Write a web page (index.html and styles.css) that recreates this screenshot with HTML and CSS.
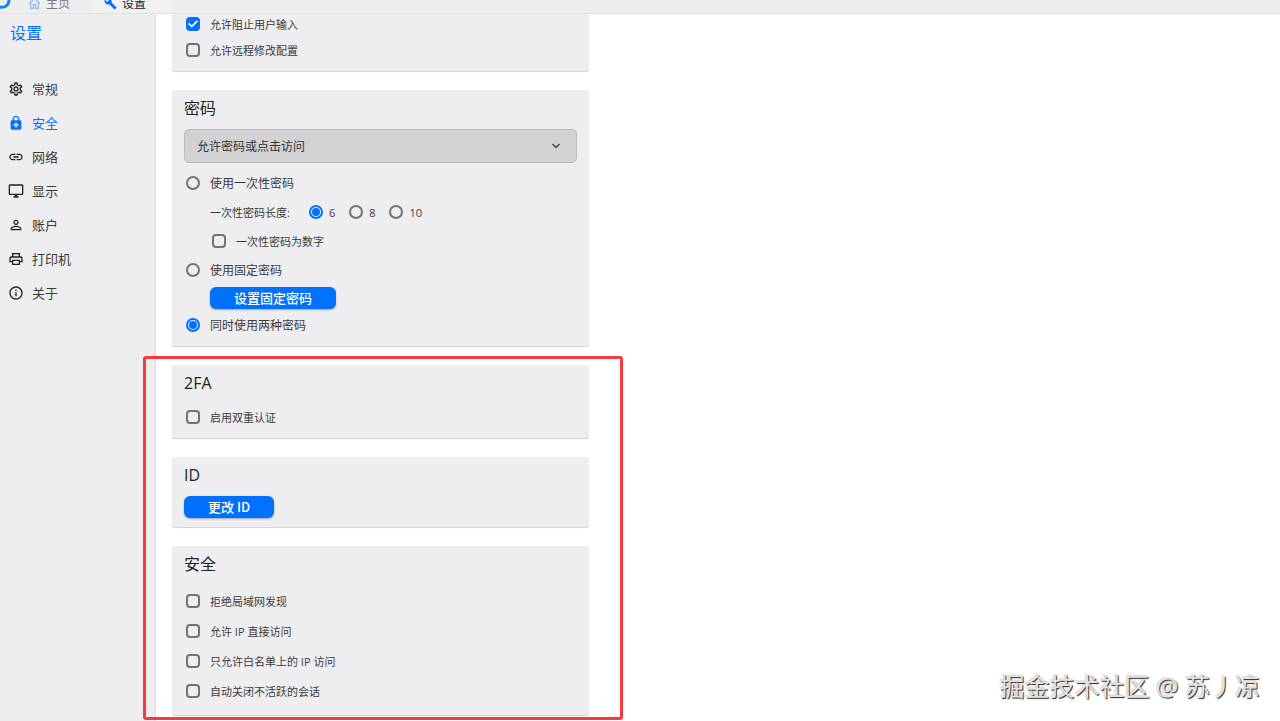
FILE: index.html
```html
<!DOCTYPE html>
<html lang="zh">
<head>
    <meta charset="UTF-8">
    <meta name="viewport" content="width=device-width, initial-scale=1.0">
    <title>设置</title>
    <link rel="stylesheet" href="styles.css">
</head>
<body>

<!-- 顶部标签栏 -->
<header class="tab-bar">
    <svg class="logo" viewBox="0 0 20 22"><path d="M14 3.500A7 7 0 1 1 6 3.500" fill="none" stroke="#0a84ff" stroke-width="3"/></svg>
    <a class="tab" href="#home">
        <svg class="tab-icon" viewBox="0 0 24 24"><path d="M2 12L12 3l10 9M5 10v11h5v-7h4v7h5V10" fill="none" stroke="#7db5ff" stroke-width="2"/></svg>
        主页
    </a>
    <a class="tab active" href="#settings">
        <svg class="tab-icon" viewBox="0 0 24 24"><path fill="#0071ff" d="M22.700 19l-9.100-9.100c.9-2.300.4-5-1.500-6.900-2-2-5-2.400-7.400-1.300L9 6 6 9 1.600 4.700C.4 7.100.9 10.100 2.900 12.100c1.900 1.900 4.600 2.400 6.900 1.500l9.100 9.100c.4.4 1 .4 1.400 0l2.300-2.300c.5-.4.5-1.100.1-1.400z"/></svg>
        设置
    </a>
</header>

<div class="layout">
    <!-- 左侧菜单 -->
    <aside class="sidebar">
        <h1>设置</h1>
        <nav>
            <a href="#general">
                <svg viewBox="0 0 24 24"><path d="M19.430 12.980c.04-.32.07-.64.07-.98 0-.34-.03-.66-.07-.98l2.110-1.650c.19-.15.24-.42.12-.64l-2-3.460c-.09-.16-.26-.25-.44-.25-.06 0-.12.01-.17.03l-2.490 1c-.52-.4-1.080-.73-1.690-.98l-.38-2.650C14.460 2.180 14.250 2 14 2h-4c-.25 0-.46.18-.49.42l-.38 2.650c-.61.25-1.170.59-1.690.98l-2.490-1c-.06-.02-.12-.03-.18-.03-.17 0-.34.09-.43.25l-2 3.460c-.13.22-.07.49.12.64l2.110 1.650c-.04.32-.07.65-.07.98 0 .33.03.66.07.98l-2.110 1.650c-.19.15-.24.42-.12.64l2 3.460c.09.16.26.25.44.25.06 0 .12-.01.17-.03l2.490-1c.52.4 1.080.73 1.690.98l.38 2.650c.03.24.24.42.49.42h4c.25 0 .46-.18.49-.42l.38-2.650c.61-.25 1.170-.59 1.690-.98l2.490 1c.06.02.12.03.18.03.17 0 .34-.09.43-.25l2-3.460c.12-.22.07-.49-.12-.64l-2.110-1.650zm-1.980-1.710c.04.31.05.52.05.73 0 .21-.02.43-.05.73l-.14 1.130.89.7 1.080.84-.7 1.210-1.270-.51-1.040-.42-.9.68c-.43.32-.84.56-1.250.73l-1.060.43-.16 1.130-.2 1.350h-1.400l-.19-1.350-.16-1.130-1.060-.43c-.43-.18-.83-.41-1.230-.71l-.91-.7-1.060.43-1.270.51-.7-1.210 1.080-.84.89-.7-.14-1.130c-.03-.31-.05-.54-.05-.74s.02-.43.05-.73l.14-1.130-.89-.7-1.080-.84.7-1.210 1.270.51 1.040.42.9-.68c.43-.32.84-.56 1.250-.73l1.060-.43.16-1.130.2-1.350h1.390l.19 1.350.16 1.130 1.060.43c.43.18.83.41 1.230.71l.91.7 1.060-.43 1.270-.51.7 1.210-1.070.85-.89.7.14 1.130zM12 8c-2.210 0-4 1.790-4 4s1.790 4 4 4 4-1.790 4-4-1.790-4-4-4zm0 6c-1.100 0-2-.9-2-2s.9-2 2-2 2 .9 2 2-.9 2-2 2z"/></svg>
                常规
            </a>
            <a href="#safety" class="active">
                <svg viewBox="0 0 24 24"><path fill-rule="evenodd" d="M18 8h-1V6c0-2.760-2.240-5-5-5S7 3.240 7 6v2H6c-1.100 0-2 .9-2 2v10c0 1.100.9 2 2 2h12c1.100 0 2-.9 2-2V10c0-1.100-.9-2-2-2zM8.900 6c0-1.710 1.390-3.100 3.100-3.100s3.100 1.390 3.100 3.100v2H8.900V6zM16 16h-3v3h-2v-3H8v-2h3v-3h2v3h3v2z"/></svg>
                安全
            </a>
            <a href="#network">
                <svg viewBox="0 0 24 24"><path d="M3.900 12c0-1.710 1.390-3.100 3.100-3.100h4V7H7c-2.760 0-5 2.240-5 5s2.240 5 5 5h4v-1.900H7c-1.710 0-3.100-1.390-3.100-3.100zM8 13h8v-2H8v2zm9-6h-4v1.900h4c1.710 0 3.100 1.390 3.100 3.100s-1.390 3.100-3.100 3.100h-4V17h4c2.760 0 5-2.240 5-5s-2.240-5-5-5z"/></svg>
                网络
            </a>
            <a href="#display">
                <svg viewBox="0 0 24 24"><path d="M21 2H3c-1.100 0-2 .9-2 2v12c0 1.100.9 2 2 2h7v2H8v2h8v-2h-2v-2h7c1.100 0 2-.9 2-2V4c0-1.100-.9-2-2-2zm0 14H3V4h18v12z"/></svg>
                显示
            </a>
            <a href="#account">
                <svg viewBox="0 0 24 24"><path d="M12 5.900c1.160 0 2.100.94 2.100 2.100s-.94 2.100-2.100 2.100S9.900 9.160 9.900 8s.94-2.100 2.100-2.100m0 9c2.970 0 6.100 1.460 6.100 2.100v1.100H5.900V17c0-.64 3.130-2.100 6.100-2.100M12 4C9.790 4 8 5.790 8 8s1.790 4 4 4 4-1.790 4-4-1.790-4-4-4zm0 9c-2.670 0-8 1.340-8 4v3h16v-3c0-2.660-5.330-4-8-4z"/></svg>
                账户
            </a>
            <a href="#printer">
                <svg viewBox="0 0 24 24"><path d="M19 8h-1V3H6v5H5c-1.660 0-3 1.340-3 3v6h4v4h12v-4h4v-6c0-1.660-1.340-3-3-3zM8 5h8v3H8V5zm8 14H8v-4h8v4zm2-4v-2H6v2H4v-4c0-.55.45-1 1-1h14c.55 0 1 .45 1 1v4h-2z"/></svg>
                打印机
            </a>
            <a href="#about">
                <svg viewBox="0 0 24 24"><path d="M11 7h2v2h-2zm0 4h2v6h-2zm1-9C6.480 2 2 6.480 2 12s4.480 10 10 10 10-4.480 10-10S17.520 2 12 2zm0 18c-4.410 0-8-3.590-8-8s3.590-8 8-8 8 3.590 8 8-3.590 8-8 8z"/></svg>
                关于
            </a>
        </nav>
    </aside>

    <main class="content">
        <!-- 权限 -->
        <section class="card card-scrolled">
            <div class="options options-tight">
                <label class="option"><input type="checkbox" checked>允许阻止用户输入</label>
                <label class="option"><input type="checkbox">允许远程修改配置</label>
            </div>
        </section>

        <!-- 密码 -->
        <section class="card">
            <h2>密码</h2>
            <div class="select-box">
                <select aria-label="访问方式">
                    <option>允许密码或点击访问</option>
                </select>
                <svg viewBox="0 0 24 24"><path d="M5 8l7 7 7-7" fill="none" stroke="#444" stroke-width="3"/></svg>
            </div>
            <div class="options">
                <label class="option option-main"><input type="radio" name="password-mode">使用一次性密码</label>
                <div class="sub-options">
                    <span>一次性密码长度:</span>
                    <div class="lengths">
                        <label><input type="radio" name="password-length" checked>6</label>
                        <label><input type="radio" name="password-length">8</label>
                        <label><input type="radio" name="password-length">10</label>
                    </div>
                </div>
                <div class="sub-options">
                    <label class="option"><input type="checkbox">一次性密码为数字</label>
                </div>
                <label class="option option-main"><input type="radio" name="password-mode">使用固定密码</label>
            </div>
            <div class="fixed-password">
                <button type="button" class="btn">设置固定密码</button>
            </div>
            <label class="option option-main"><input type="radio" name="password-mode" checked>同时使用两种密码</label>
        </section>

        <div class="marked">
            <section class="card">
                <h2>2FA</h2>
                <div class="options options-first">
                    <label class="option"><input type="checkbox">启用双重认证</label>
                </div>
            </section>

            <section class="card card-id">
                <h2>ID</h2>
                <button type="button" class="btn">更改 ID</button>
            </section>

            <section class="card card-safety">
                <h2>安全</h2>
                <div class="options options-loose">
                    <label class="option"><input type="checkbox">拒绝局域网发现</label>
                    <label class="option"><input type="checkbox">允许 IP 直接访问</label>
                    <label class="option"><input type="checkbox">只允许白名单上的 IP 访问</label>
                    <label class="option"><input type="checkbox">自动关闭不活跃的会话</label>
                </div>
            </section>
            <div class="mark-frame"></div>
        </div>
    </main>
</div>

<div class="watermark">掘金技术社区 @ 苏丿凉</div>

</body>
</html>
```
FILE: styles.css
```css
* {
    box-sizing: border-box;
}
body {
    position: relative;
    display: flex;
    flex-direction: column;
    height: 100vh;
    margin: 0;
    overflow: hidden;
    background-color: #fff;
    color: #3a3a3a;
    font-family: "Open Sans", "Noto Sans CJK SC", sans-serif;
    font-size: 11px;
}
h1, h2 {
    margin: 0;
    font-size: 16px;
    font-weight: 400;
    line-height: 24px;
}
a {
    color: inherit;
    text-decoration: none;
}

/* 标签栏 */
.tab-bar {
    display: flex;
    flex: none;
    align-items: flex-end;
    height: 14px;
    overflow: hidden;
    background-color: #eeeef0;
    border-bottom: 1px solid #e2e2e4;
}
.logo {
    width: 20px;
    height: 22px;
    margin-left: -8px;
}
.tab {
    display: flex;
    align-items: center;
    gap: 5px;
    height: 20px;
    padding: 0 24px 0 16px;
    color: #777;
    font-size: 12px;
}
.tab.active {
    padding: 0 24px 0 10px;
    background-color: #f1f1f3;
    color: #222;
}
.tab-icon {
    width: 13px;
    height: 13px;
}

/* 左侧菜单 */
.layout {
    display: flex;
    flex: 1;
}
.sidebar {
    flex: none;
    width: 156px;
    padding: 7px 0;
    background-color: #eeeef1;
    border-right: 1px solid #dcdcde;
}
.sidebar h1 {
    margin: 0 0 27px 10px;
    color: #0071ff;
}
.sidebar nav {
    font-family: "Noto Sans CJK SC", sans-serif;
}
.sidebar nav a {
    display: flex;
    align-items: center;
    gap: 8px;
    height: 34px;
    padding-left: 8px;
    font-size: 13px;
    line-height: 18px;
}
.sidebar nav svg {
    width: 16px;
    height: 16px;
    fill: #222;
}
.sidebar nav .active {
    color: #0071ff;
}
.sidebar nav .active svg {
    fill: #0071ff;
}

/* 设置卡片 */
.content {
    flex: 1;
    padding: 0 16px;
}
.content, .marked {
    display: flex;
    flex-direction: column;
    gap: 19px;
}
.content > .card, .marked {
    width: 100%;
    max-width: 417px;
}
.card {
    padding: 6px 12px 11px;
    background-color: #eeeef0;
    border-radius: 3px;
    box-shadow: 0 1px 1px #d0d0d2;
}
.card h2 {
    color: #222;
}
.card-scrolled {
    padding-top: 0;
    border-radius: 0 0 3px 3px;
}
.card-id {
    padding-bottom: 9px;
}
.card-id h2 {
    margin-bottom: 9px;
}
.card-safety {
    padding-bottom: 14px;
}
.select-box {
    display: grid;
    align-items: center;
    margin: 9px 0 10px;
}
.select-box select, .select-box svg {
    grid-area: 1 / 1;
}
.select-box select {
    width: 100%;
    height: 34px;
    padding: 0 12px;
    appearance: none;
    background-color: #d2d2d4;
    border: 1px solid #bcbcbe;
    border-radius: 5px;
    color: #333;
    font-family: inherit;
    font-size: 12px;
}
.select-box svg {
    justify-self: end;
    width: 12px;
    height: 12px;
    margin-right: 15px;
    pointer-events: none;
}

/* 选项 */
.options {
    display: flex;
    flex-direction: column;
    gap: 9px;
}
.options-tight {
    gap: 6px;
}
.options-first {
    margin-top: 12px;
}
.options-loose {
    gap: 10px;
    margin-top: 15px;
}
.option {
    display: flex;
    align-items: center;
    gap: 10px;
    height: 20px;
    padding-left: 2px;
}
.option-main {
    font-size: 12px;
}
.sub-options {
    display: flex;
    align-items: center;
    gap: 19px;
    height: 20px;
    padding-left: 26px;
}
.lengths {
    display: flex;
    gap: 14px;
}
.lengths label {
    display: flex;
    align-items: center;
    gap: 6px;
}
input {
    display: grid;
    place-content: center;
    flex: none;
    width: 14px;
    height: 14px;
    margin: 0;
    appearance: none;
    border: 2px solid #737375;
    border-radius: 4px;
}
input[type="radio"] {
    border-radius: 50%;
}
input:checked {
    border-color: #0071ff;
}
input[type="checkbox"]:checked {
    background-color: #0071ff;
}
input[type="checkbox"]:checked::before {
    content: "";
    width: 10px;
    height: 10px;
    background-color: #fff;
    clip-path: polygon(0 50%, 12% 38%, 38% 62%, 88% 12%, 100% 24%, 38% 86%);
}
input[type="radio"]:checked::before {
    content: "";
    width: 8px;
    height: 8px;
    background-color: #0071ff;
    border-radius: 50%;
}
.btn {
    display: block;
    height: 22px;
    padding: 0 24px;
    background-color: #0071ff;
    border: none;
    border-radius: 6px;
    box-shadow: 0 1px 2px rgba(0, 0, 0, 0.3);
    color: #fff;
    font-family: "Noto Sans CJK SC", sans-serif;
    font-size: 13px;
    font-weight: 500;
    line-height: 22px;
}
.fixed-password {
    padding: 7px 0 6px 26px;
}

/* 红色标注框 */
.marked {
    position: relative;
}
.mark-frame {
    position: absolute;
    top: -9px;
    right: -34px;
    bottom: -5px;
    left: -29px;
    border: 3px solid #f83a3e;
    border-radius: 3px;
    pointer-events: none;
}

.watermark {
    position: absolute;
    right: 20px;
    bottom: 17px;
    color: #e4e4e4;
    font-size: 25px;
    line-height: 36px;
    text-shadow: 1px 1px 1px #222, -1px -1px 1px #ddd;
}
```
